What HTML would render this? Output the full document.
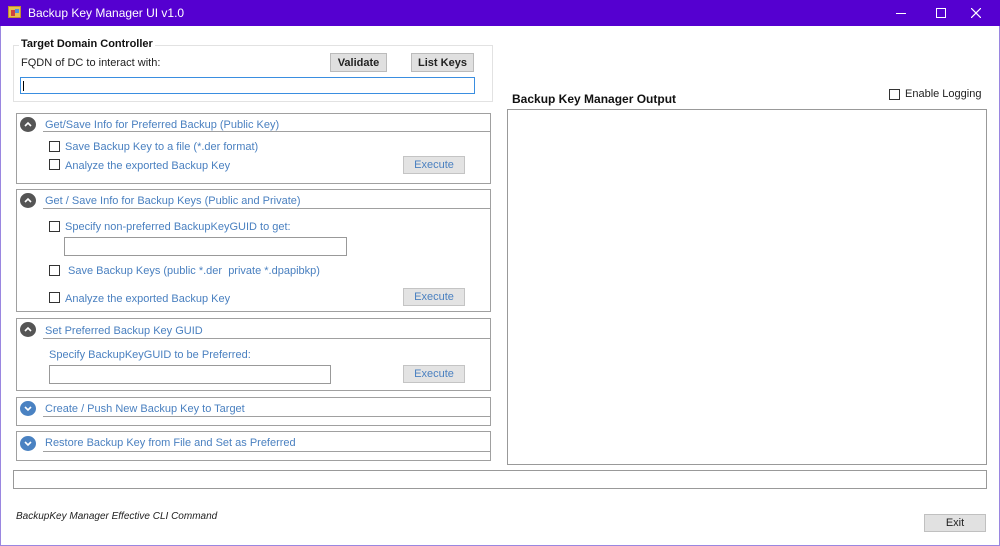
<!DOCTYPE html>
<html><head><style>
*{box-sizing:border-box;margin:0;padding:0}
body{width:1000px;height:546px;background:#fff;font-family:"Liberation Sans",sans-serif;font-size:11px;position:relative;overflow:hidden}
.a{position:absolute}
.win{left:0;top:0;width:1000px;height:546px;border:1px solid #9a86e0;border-top:none}
.tb{left:0;top:0;width:1000px;height:26px;background:#5500d0;color:#fff;font-size:12px}
.lbl{color:#4a80c0;font-size:11px;white-space:nowrap}
.cb{width:11px;height:11px;border:1px solid #333;background:#fff}
.btn{background:#e3e3e3;border:1px solid #c4c4c4;text-align:center;font-size:11px;color:#4a80c0;line-height:17px}
.btnb{background:#e0e0e0;border:1px solid #bbb;text-align:center;font-weight:bold;color:#222;line-height:18px;font-size:11px}
.pan{border:1px solid #a0a0a0;background:#fff}
.hl{height:1px;background:#a0a0a0}
.ic{width:16px;height:15px}
.inp{border:1px solid #999;background:#fff}
</style></head><body>
<div class="a win"></div>
<div class="a tb">
 <div class="a" style="left:8px;top:6px;width:13px;height:12px;background:#e8c050;border:1px solid #c09030"><div class="a" style="left:2px;top:3px;width:4px;height:6px;background:#d04040"></div><div class="a" style="left:6px;top:2px;width:4px;height:4px;background:#5090e0"></div></div>
 <div class="a" style="left:28px;top:6px">Backup Key Manager UI v1.0</div>
 <div class="a" style="left:896px;top:13px;width:10px;height:1px;background:#fff"></div>
 <div class="a" style="left:936px;top:8px;width:10px;height:10px;border:1px solid #fff"></div>
 <svg class="a" style="left:971px;top:8px" width="10" height="10"><path d="M0 0L10 10M10 0L0 10" stroke="#fff" stroke-width="1.2"/></svg>
</div>

<div class="a" style="left:13px;top:45px;width:480px;height:57px;border:1px solid #e2e2e2"></div>
<div class="a" style="left:19px;top:38px;background:#fff;padding:0 2px;font-weight:bold;font-size:11px;color:#111">Target Domain Controller</div>
<div class="a" style="left:21px;top:57px;color:#222">FQDN of DC to interact with:</div>
<div class="a btnb" style="left:330px;top:53px;width:57px;height:19px">Validate</div>
<div class="a btnb" style="left:411px;top:53px;width:63px;height:19px">List Keys</div>
<div class="a" style="left:20px;top:77px;width:455px;height:17px;border:1px solid #3a8ee0"><div class="a" style="left:2px;top:3px;width:1px;height:10px;background:#000"></div></div>

<!-- panel 1 -->
<div class="a pan" style="left:16px;top:113px;width:475px;height:71px"></div>
<div class="a hl" style="left:43px;top:131px;width:447px"></div>
<svg class="a ic" style="left:20px;top:117px"><ellipse cx="8" cy="7.5" rx="8" ry="7.5" fill="#555"/><path d="M5 9L8 6L11 9" stroke="#fff" stroke-width="1.6" fill="none"/></svg>
<div class="a lbl" style="left:45px;top:119px">Get/Save Info for Preferred Backup (Public Key)</div>
<div class="a cb" style="left:49px;top:141px"></div><div class="a lbl" style="left:65px;top:141px">Save Backup Key to a file (*.der format)</div>
<div class="a cb" style="left:49px;top:159px"></div><div class="a lbl" style="left:65px;top:160px">Analyze the exported Backup Key</div>
<div class="a btn" style="left:403px;top:156px;width:62px;height:18px">Execute</div>

<!-- panel 2 -->
<div class="a pan" style="left:16px;top:189px;width:475px;height:123px"></div>
<div class="a hl" style="left:43px;top:208px;width:447px"></div>
<svg class="a ic" style="left:20px;top:193px"><ellipse cx="8" cy="7.5" rx="8" ry="7.5" fill="#555"/><path d="M5 9L8 6L11 9" stroke="#fff" stroke-width="1.6" fill="none"/></svg>
<div class="a lbl" style="left:45px;top:195px">Get / Save Info for Backup Keys (Public and Private)</div>
<div class="a cb" style="left:49px;top:221px"></div><div class="a lbl" style="left:65px;top:221px">Specify non-preferred BackupKeyGUID to get:</div>
<div class="a inp" style="left:64px;top:237px;width:283px;height:19px"></div>
<div class="a cb" style="left:49px;top:265px"></div><div class="a lbl" style="left:68px;top:265px">Save Backup Keys (public *.der&nbsp; private *.dpapibkp)</div>
<div class="a cb" style="left:49px;top:292px"></div><div class="a lbl" style="left:65px;top:293px">Analyze the exported Backup Key</div>
<div class="a btn" style="left:403px;top:288px;width:62px;height:18px">Execute</div>

<!-- panel 3 -->
<div class="a pan" style="left:16px;top:318px;width:475px;height:73px"></div>
<div class="a hl" style="left:43px;top:338px;width:447px"></div>
<svg class="a ic" style="left:20px;top:322px"><ellipse cx="8" cy="7.5" rx="8" ry="7.5" fill="#555"/><path d="M5 9L8 6L11 9" stroke="#fff" stroke-width="1.6" fill="none"/></svg>
<div class="a lbl" style="left:45px;top:325px">Set Preferred Backup Key GUID</div>
<div class="a lbl" style="left:49px;top:349px">Specify BackupKeyGUID to be Preferred:</div>
<div class="a inp" style="left:49px;top:365px;width:282px;height:19px"></div>
<div class="a btn" style="left:403px;top:365px;width:62px;height:18px">Execute</div>

<!-- panel 4 -->
<div class="a pan" style="left:16px;top:397px;width:475px;height:29px"></div>
<div class="a hl" style="left:43px;top:416px;width:447px"></div>
<svg class="a ic" style="left:20px;top:401px"><ellipse cx="8" cy="7.5" rx="8" ry="7.5" fill="#4a82c2"/><path d="M5 6L8 9L11 6" stroke="#fff" stroke-width="1.6" fill="none"/></svg>
<div class="a lbl" style="left:45px;top:403px">Create / Push New Backup Key to Target</div>

<!-- panel 5 -->
<div class="a pan" style="left:16px;top:431px;width:475px;height:30px"></div>
<div class="a hl" style="left:43px;top:451px;width:447px"></div>
<svg class="a ic" style="left:20px;top:436px"><ellipse cx="8" cy="7.5" rx="8" ry="7.5" fill="#4a82c2"/><path d="M5 6L8 9L11 6" stroke="#fff" stroke-width="1.6" fill="none"/></svg>
<div class="a lbl" style="left:45px;top:437px">Restore Backup Key from File and Set as Preferred</div>

<!-- output -->
<div class="a" style="left:512px;top:92px;font-weight:bold;font-size:12px;color:#111">Backup Key Manager Output</div>
<div class="a cb" style="left:889px;top:89px;width:11px;height:11px"></div>
<div class="a" style="left:905px;top:88px;color:#222">Enable Logging</div>
<div class="a" style="left:507px;top:109px;width:480px;height:356px;border:1px solid #999"></div>

<div class="a" style="left:13px;top:470px;width:974px;height:19px;border:1px solid #999"></div>
<div class="a" style="left:16px;top:511px;font-style:italic;font-size:10px;color:#222">BackupKey Manager Effective CLI Command</div>
<div class="a" style="left:924px;top:514px;width:62px;height:18px;background:#e1e1e1;border:1px solid #c0c0c0;text-align:center;line-height:16px;color:#222">Exit</div>
</body></html>
